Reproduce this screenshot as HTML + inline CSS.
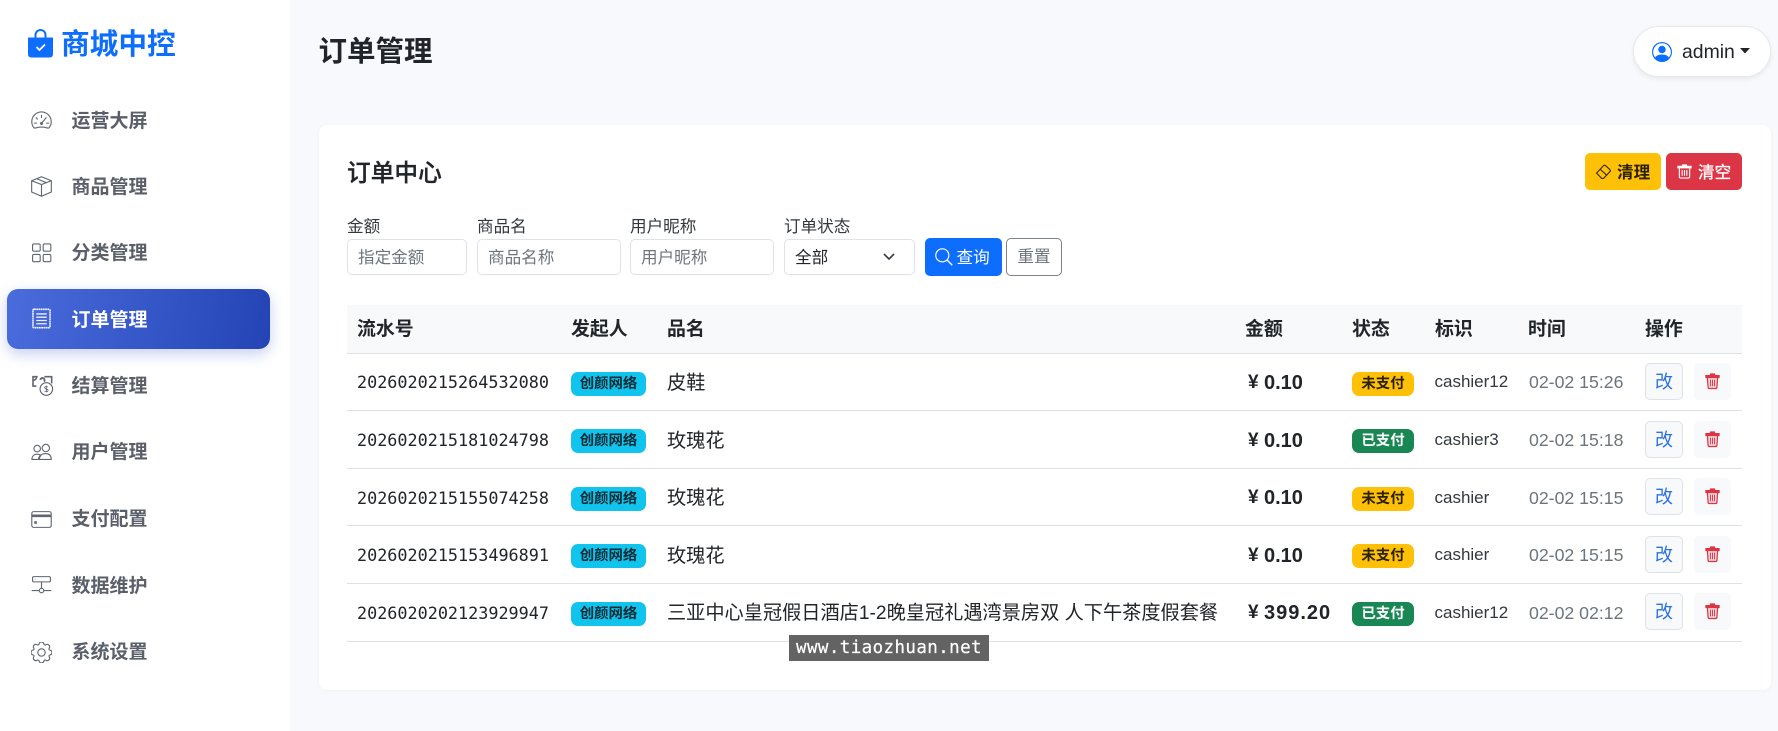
<!DOCTYPE html>
<html lang="zh-CN"><head><meta charset="utf-8"><title>订单管理</title>
<style>
*{box-sizing:border-box}
html,body{margin:0;padding:0;width:1778px;height:731px;overflow:hidden;background:#f8f9fc}
body{position:relative;font-family:"Liberation Sans","Noto Sans CJK SC",sans-serif;color:#212529}
.a{position:absolute;white-space:nowrap}
svg{position:absolute;display:block}
#side{position:absolute;left:0;top:0;width:290px;height:731px;background:#fff}
.n{position:absolute;left:71.5px;font-size:19px;line-height:26px;font-weight:700;color:#5a5f69;white-space:nowrap}
.i{left:31px;width:21px;height:21px;color:#5f6670;fill:none;stroke:currentColor;stroke-width:.85}
#active{position:absolute;left:7px;top:289px;width:263px;height:60px;border-radius:11px;background:linear-gradient(100deg,#4a6cdc,#2444b6);box-shadow:0 5px 14px rgba(50,85,200,.28)}
#card{position:absolute;left:319px;top:125px;width:1452px;height:565px;background:#fff;border-radius:8px;box-shadow:0 1px 4px rgba(0,0,0,.04)}
.lb{font-size:16.6px;line-height:22px;color:#33383e;top:216px}
.in{position:absolute;top:239px;height:36px;background:#fff;border:1px solid #dfe2e6;border-radius:5px;font-size:16.6px;line-height:36px;padding-left:10px;color:#6c757d;white-space:nowrap}
.th{top:317px;font-size:18.9px;line-height:26px;font-weight:700;color:#212529}
.line{position:absolute;left:347px;width:1395px;height:1px;background:#dee2e6}
.no{left:357px;font-family:"DejaVu Sans Mono","Liberation Mono",monospace;font-size:16.8px;line-height:24px;color:#212529}
.bd{position:absolute;height:24px;border-radius:7px;font-size:14.4px;line-height:24px;text-align:center;font-weight:700;white-space:nowrap}
.s{left:571px;width:75px;background:#10c4ee;color:#0f2a33}
.y{left:1352px;width:62px;background:#ffc107;color:#2a2106}
.g{left:1352px;width:62px;background:#198754;color:#fff}
.pn{left:667px;font-size:19.2px;line-height:26px;color:#212529}
.am{left:1264px;font-size:20px;line-height:26px;font-weight:700;color:#212529}
.yn{left:1248px;font-size:19px;line-height:26px;font-weight:700;color:#212529}
.cs{left:1434.5px;font-size:17px;line-height:24px;color:#33383e}
.tm{left:1529px;font-size:17.7px;line-height:24px;color:#6c757d}
.ed{position:absolute;left:1645px;width:38px;height:37px;background:#f8f9fa;border:1px solid #dee2e6;border-radius:5px;color:#2a72e0;font-size:18px;line-height:36px;text-align:center}
.de{position:absolute;left:1694px;width:37px;height:37px;background:#f8f9fa;border-radius:5px}
.de svg{left:11px;top:10px;width:15px;height:17px;color:#dc3545}
</style></head><body>

<div id="side">
<svg style="left:27px;top:28px;width:27px;height:30px" viewBox="0 0 27 30"><path d="M8.500 10V7a5 5 0 0 1 10 0v3" fill="none" stroke="#0d6efd" stroke-width="2"/><path d="M1 9.500h25v17a3 3 0 0 1-3 3H4a3 3 0 0 1-3-3z" fill="#0d6efd"/><path d="M9.500 19l3 3 5.500-5.500" fill="none" stroke="#fff" stroke-width="1.800"/></svg>
<div class="a" style="left:61px;top:26px;font-size:28.7px;line-height:38px;font-weight:700;color:#0d6efd">商城中控</div>

<svg class="i" style="top:110px" viewBox="0 0 16 16"><path d="M2.300 13.600A7.400 7.400 0 1 1 13.700 13.600C12.600 14.200 11.800 13 8 13s-4.600 1.200-5.700.6z"/><path d="M8 4v1.800M3.900 5.900l1 1M2.500 10h1.700M11.800 10h1.700M8 10.200l3.500-4.300" stroke-linecap="round"/><circle cx="8" cy="10.300" r=".7"/></svg>
<div class="n" style="top:109px">运营大屏</div>

<svg class="i" style="top:176px" viewBox="0 0 16 16"><path d="M8 .6l7.500 3v8.600L8 15.400.5 12.200V3.600zM.5 3.600L8 6.500l7.500-2.900M8 6.500v8.900M4.300 2.100l7.500 3"/></svg>
<div class="n" style="top:175px">商品管理</div>

<svg class="i" style="top:242px" viewBox="0 0 16 16" stroke-width="1"><rect x="1.200" y="1.500" width="5.800" height="5.500" rx="1"/><rect x="9.300" y="1.500" width="5.800" height="5.500" rx="1"/><rect x="1.200" y="9.500" width="5.800" height="5.500" rx="1"/><rect x="9.300" y="9.500" width="5.800" height="5.500" rx="1"/></svg>
<div class="n" style="top:241px">分类管理</div>

<div id="active"></div>
<svg class="i" style="top:308px;color:#eef2ff;stroke-width:1.200" viewBox="0 0 16 16"><rect x="1.500" y="1" width="13" height="14" rx=".8" stroke-dasharray="1.400 .3"/><path d="M4 4.500h8M4 7h8M4 9.500h8M4 12h8" stroke-width="1"/></svg>
<div class="n" style="top:308px;color:#fff">订单管理</div>

<svg class="i" style="top:373px;width:24px;height:24px" viewBox="0 0 18 18"><path d="M5 2.800H1.500v7h2.500M1.500 5.500A2.700 2.700 0 0 0 4.200 2.800M10 2.800h5.500v5" stroke-width="1.200"/><path d="M7 5.200a1.600 1.600 0 1 1 2.800 1.200" stroke-width="1.400"/><circle cx="11.500" cy="12" r="4.700"/><path d="M12.700 10.600c-.5-.7-2.400-.7-2.400.5s2.500.7 2.500 1.900-2 1.200-2.600.4M11.500 9.500v5" stroke-width=".6"/></svg>
<div class="n" style="top:374px">结算管理</div>

<svg class="i" style="top:442px" viewBox="0 0 16 16" stroke-width="1"><circle cx="4.700" cy="5" r="2.500"/><circle cx="11.300" cy="4.600" r="2.800"/><path d="M.7 13.300c0-2.500 1.500-4 4-4 1.300 0 2.200.4 2.800 1-.9.900-1.200 2-1.200 3zM5.800 13.300c0-2.700 2.100-4.500 5.400-4.500 3.400 0 4.200 2.200 4.200 4.500z"/></svg>
<div class="n" style="top:440px">用户管理</div>

<svg class="i" style="top:509px" viewBox="0 0 16 16" stroke-width="1"><rect x=".6" y="2" width="14.800" height="12" rx="1.500"/><rect x=".6" y="4.200" width="14.800" height="2" fill="currentColor" stroke="none"/><rect x="2.500" y="9.300" width="2" height="2" fill="currentColor" stroke="none"/></svg>
<div class="n" style="top:507px">支付配置</div>

<svg class="i" style="top:574px" viewBox="0 0 16 16" stroke-width=".9"><rect x="1.200" y="2" width="13.600" height="4" rx="1"/><path d="M8 6v5.500M.5 12.600h5.700M9.800 12.600h5.700M3 4h.4"/><circle cx="8" cy="12.600" r="1.700"/></svg>
<div class="n" style="top:574px">数据维护</div>

<svg class="i" style="top:642px" viewBox="0 0 16 16"><path d="M9.796 1.343c-.527-1.790-3.065-1.790-3.592 0l-.094.319a.873.873 0 0 1-1.255.52l-.292-.16c-1.640-.892-3.433.902-2.540 2.541l.159.292a.873.873 0 0 1-.52 1.255l-.319.094c-1.790.527-1.790 3.065 0 3.592l.319.094a.873.873 0 0 1 .52 1.255l-.160.292c-.892 1.640.901 3.434 2.541 2.540l.292-.159a.873.873 0 0 1 1.255.52l.094.319c.527 1.790 3.065 1.790 3.592 0l.094-.319a.873.873 0 0 1 1.255-.52l.292.160c1.640.893 3.434-.902 2.540-2.541l-.159-.292a.873.873 0 0 1 .52-1.255l.319-.094c1.790-.527 1.790-3.065 0-3.592l-.319-.094a.873.873 0 0 1-.52-1.255l.160-.292c.893-1.640-.902-3.433-2.541-2.540l-.292.159a.873.873 0 0 1-1.255-.52z"/><circle cx="8" cy="8" r="2.800"/></svg>
<div class="n" style="top:640px">系统设置</div>
</div>

<div class="a" style="left:318.5px;top:33px;font-size:28.5px;line-height:38px;font-weight:700;color:#212529">订单管理</div>

<div style="position:absolute;left:1633px;top:26px;width:138px;height:51px;background:#fff;border-radius:26px;border:1px solid #e6e8ec;box-shadow:0 2px 5px rgba(0,0,0,.07)"></div>
<svg style="left:1652px;top:42px;width:20px;height:20px" viewBox="0 0 16 16" fill="#0d6efd"><path d="M11 6a3 3 0 1 1-6 0 3 3 0 0 1 6 0"/><path fill-rule="evenodd" d="M0 8a8 8 0 1 1 16 0A8 8 0 0 1 0 8m8-7a7 7 0 0 0-5.468 11.370C3.242 11.226 4.805 10 8 10s4.757 1.225 5.468 2.370A7 7 0 0 0 8 1"/></svg>
<div class="a" style="left:1682px;top:39px;font-size:19.4px;line-height:26px;color:#212529">admin</div>
<svg style="left:1740px;top:48px;width:10px;height:6px" viewBox="0 0 10 6"><path d="M0 0h10L5 5.500z" fill="#212529"/></svg>

<div id="card"></div>
<div class="a" style="left:347px;top:158px;font-size:23.7px;line-height:32px;font-weight:500;color:#212529;-webkit-text-stroke:.3px #212529">订单中心</div>

<div style="position:absolute;left:1585px;top:153px;width:76px;height:37px;background:#ffc107;border-radius:5px"></div>
<svg style="left:1595px;top:163px;width:17px;height:17px" viewBox="0 0 16 16" fill="none" stroke="#3a2d05" stroke-width="1.100"><path d="M1.500 9.500L8 2.500a1.500 1.500 0 0 1 2 0l4 3.700a1.500 1.500 0 0 1 0 2L8 14.500H6.300z"/><path d="M5 6l6 5.500" /></svg>
<div class="a" style="left:1617px;top:161px;font-size:16.6px;line-height:24px;font-weight:700;color:#2a2106">清理</div>
<div style="position:absolute;left:1666px;top:153px;width:76px;height:37px;background:#dc3545;border-radius:5px"></div>
<svg style="left:1677px;top:163px;width:15px;height:17px" viewBox="0 0 16 16" fill="none" stroke="#fff" stroke-width="1.200"><path d="M2.500 4v9.500a1.500 1.500 0 0 0 1.500 1.500h8a1.500 1.500 0 0 0 1.500-1.500V4M5.500 6.500v6M8 6.500v6M10.500 6.500v6"/><path d="M1 2.500h14v1.500H1zM5.500 2.500l.5-1.500h4l.5 1.500" fill="#fff"/></svg>
<div class="a" style="left:1698px;top:161px;font-size:16.6px;line-height:24px;color:#fff;-webkit-text-stroke:.3px #fff">清空</div>

<div class="a lb" style="left:347px">金额</div>
<div class="a lb" style="left:477px">商品名</div>
<div class="a lb" style="left:630px">用户昵称</div>
<div class="a lb" style="left:784px">订单状态</div>
<div class="in" style="left:347px;width:120px">指定金额</div>
<div class="in" style="left:477px;width:144px">商品名称</div>
<div class="in" style="left:630px;width:144px">用户昵称</div>
<div class="in" style="left:784px;width:131px;color:#212529">全部</div>
<svg style="left:883px;top:252px;width:12px;height:10px" viewBox="0 0 12 10"><path d="M1 2l5 5 5-5" fill="none" stroke="#343a40" stroke-width="1.600"/></svg>
<div style="position:absolute;left:925px;top:238px;width:77px;height:38px;background:#0d6efd;border-radius:5px"></div>
<svg style="left:935px;top:248px;width:18px;height:18px" viewBox="0 0 16 16" fill="none" stroke="#fff" stroke-width="1"><circle cx="6.500" cy="6.500" r="5.800"/><path d="M10.800 10.800l4.500 4.500" stroke-width="1.300"/></svg>
<div class="a" style="left:956.5px;top:246px;font-size:16.6px;line-height:24px;color:#fff">查询</div>
<div style="position:absolute;left:1006px;top:238px;width:56px;height:38px;border:1.5px solid #7c838a;border-radius:5px;font-size:16.6px;line-height:36px;text-align:center;color:#6c757d">重置</div>

<div style="position:absolute;left:347px;top:305px;width:1395px;height:48px;background:#f8f9fa"></div>
<div class="a th" style="left:357px">流水号</div>
<div class="a th" style="left:571px">发起人</div>
<div class="a th" style="left:667px">品名</div>
<div class="a th" style="left:1245px">金额</div>
<div class="a th" style="left:1352px">状态</div>
<div class="a th" style="left:1435px">标识</div>
<div class="a th" style="left:1528px">时间</div>
<div class="a th" style="left:1645px">操作</div>
<div class="line" style="top:353px"></div>
<div class="line" style="top:410px"></div>
<div class="line" style="top:468px"></div>
<div class="line" style="top:525px"></div>
<div class="line" style="top:583px"></div>
<div class="line" style="top:641px"></div>

<div class="a no" style="top:370px">2026020215264532080</div>
<div class="bd s" style="top:372px">创颜网络</div>
<div class="a pn" style="top:371px">皮鞋</div>
<div class="a yn" style="top:370px">¥</div><div class="a am" style="top:370px">0.10</div>
<div class="bd y" style="top:372px">未支付</div>
<div class="a cs" style="top:370px">cashier12</div>
<div class="a tm" style="top:370px">02-02 15:26</div>
<div class="ed" style="top:363px">改</div>
<div class="de" style="top:363px"><svg viewBox="0 0 16 17" fill="none" stroke="currentColor" stroke-width="1.300"><path d="M2.500 4l.8 10.800a1.300 1.300 0 0 0 1.300 1.200h6.800a1.300 1.300 0 0 0 1.300-1.200l.8-10.800z" fill="rgba(220,53,69,.18)"/><path d="M5.800 6.500v7M8 6.500v7M10.200 6.500v7" stroke-width="1"/><path d="M1 2.200h14v2H1zM5.500 2l.5-1.500h4l.5 1.500" fill="currentColor"/></svg></div>

<div class="a no" style="top:428px">2026020215181024798</div>
<div class="bd s" style="top:429px">创颜网络</div>
<div class="a pn" style="top:429px">玫瑰花</div>
<div class="a yn" style="top:428px">¥</div><div class="a am" style="top:428px">0.10</div>
<div class="bd g" style="top:429px">已支付</div>
<div class="a cs" style="top:428px">cashier3</div>
<div class="a tm" style="top:428px">02-02 15:18</div>
<div class="ed" style="top:421px">改</div>
<div class="de" style="top:421px"><svg viewBox="0 0 16 17" fill="none" stroke="currentColor" stroke-width="1.300"><path d="M2.500 4l.8 10.800a1.300 1.300 0 0 0 1.300 1.200h6.800a1.300 1.300 0 0 0 1.300-1.200l.8-10.800z" fill="rgba(220,53,69,.18)"/><path d="M5.800 6.500v7M8 6.500v7M10.200 6.500v7" stroke-width="1"/><path d="M1 2.200h14v2H1zM5.500 2l.5-1.500h4l.5 1.500" fill="currentColor"/></svg></div>

<div class="a no" style="top:486px">2026020215155074258</div>
<div class="bd s" style="top:487px">创颜网络</div>
<div class="a pn" style="top:486px">玫瑰花</div>
<div class="a yn" style="top:485px">¥</div><div class="a am" style="top:485px">0.10</div>
<div class="bd y" style="top:487px">未支付</div>
<div class="a cs" style="top:486px">cashier</div>
<div class="a tm" style="top:486px">02-02 15:15</div>
<div class="ed" style="top:478px">改</div>
<div class="de" style="top:478px"><svg viewBox="0 0 16 17" fill="none" stroke="currentColor" stroke-width="1.300"><path d="M2.500 4l.8 10.800a1.300 1.300 0 0 0 1.300 1.200h6.800a1.300 1.300 0 0 0 1.300-1.200l.8-10.800z" fill="rgba(220,53,69,.18)"/><path d="M5.800 6.500v7M8 6.500v7M10.200 6.500v7" stroke-width="1"/><path d="M1 2.200h14v2H1zM5.500 2l.5-1.500h4l.5 1.500" fill="currentColor"/></svg></div>

<div class="a no" style="top:543px">2026020215153496891</div>
<div class="bd s" style="top:544px">创颜网络</div>
<div class="a pn" style="top:544px">玫瑰花</div>
<div class="a yn" style="top:543px">¥</div><div class="a am" style="top:543px">0.10</div>
<div class="bd y" style="top:544px">未支付</div>
<div class="a cs" style="top:543px">cashier</div>
<div class="a tm" style="top:543px">02-02 15:15</div>
<div class="ed" style="top:536px">改</div>
<div class="de" style="top:536px"><svg viewBox="0 0 16 17" fill="none" stroke="currentColor" stroke-width="1.300"><path d="M2.500 4l.8 10.800a1.300 1.300 0 0 0 1.300 1.200h6.800a1.300 1.300 0 0 0 1.300-1.200l.8-10.800z" fill="rgba(220,53,69,.18)"/><path d="M5.800 6.500v7M8 6.500v7M10.200 6.500v7" stroke-width="1"/><path d="M1 2.200h14v2H1zM5.500 2l.5-1.500h4l.5 1.500" fill="currentColor"/></svg></div>

<div class="a no" style="top:601px">2026020202123929947</div>
<div class="bd s" style="top:602px">创颜网络</div>
<div class="a pn" style="top:601px">三亚中心皇冠假日酒店1-2晚皇冠礼遇湾景房双 人下午茶度假套餐</div>
<div class="a yn" style="top:600px">¥</div><div class="a am" style="top:600px;letter-spacing:1px">399.20</div>
<div class="bd g" style="top:602px">已支付</div>
<div class="a cs" style="top:601px">cashier12</div>
<div class="a tm" style="top:601px">02-02 02:12</div>
<div class="ed" style="top:593px">改</div>
<div class="de" style="top:593px"><svg viewBox="0 0 16 17" fill="none" stroke="currentColor" stroke-width="1.300"><path d="M2.500 4l.8 10.800a1.300 1.300 0 0 0 1.300 1.200h6.800a1.300 1.300 0 0 0 1.300-1.200l.8-10.800z" fill="rgba(220,53,69,.18)"/><path d="M5.800 6.500v7M8 6.500v7M10.200 6.500v7" stroke-width="1"/><path d="M1 2.200h14v2H1zM5.500 2l.5-1.500h4l.5 1.500" fill="currentColor"/></svg></div>

<div class="a" style="left:789px;top:635px;width:200px;height:26px;background:#636363;color:#fff;font-family:'DejaVu Sans Mono','Liberation Mono',monospace;font-size:17.5px;line-height:27px;text-align:center;letter-spacing:.4px;-webkit-text-stroke:.2px #fff">www.tiaozhuan.net</div>
</body></html>
